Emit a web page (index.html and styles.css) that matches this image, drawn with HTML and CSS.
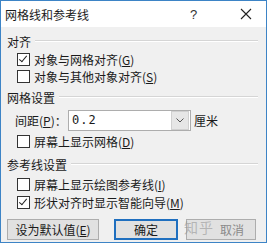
FILE: index.html
```html
<!DOCTYPE html>
<html lang="zh">
<head>
  <meta charset="UTF-8">
  <title>网格线和参考线</title>
  <link rel="stylesheet" href="styles.css">
</head>
<body>
  <div class="dialog">
    <div class="titlebar">
      <span class="title">网格线和参考线</span>
      <span class="help">?</span>
      <span class="close">
        <svg width="12" height="12" viewBox="0 0 12 12"><path d="M1 1 L11 11 M11 1 L1 11" stroke="#222" stroke-width="1.1" fill="none"/></svg>
      </span>
    </div>

    <div class="content">
      <div class="group-head"><span>对齐</span><i class="rule"></i></div>
      <label class="check"><span class="box on"></span>对象与网格对齐(<u>G</u>)</label>
      <label class="check"><span class="box"></span>对象与其他对象对齐(<u>S</u>)</label>

      <div class="group-head"><span>网格设置</span><i class="rule"></i></div>
      <div class="spacing">
        <span class="lbl">间距(<u>P</u>)：</span>
        <div class="combo">
          <span class="val">0.2</span>
          <span class="arrow">
            <svg width="8" height="5" viewBox="0 0 8 5"><path d="M0.5 0.5 L4 4 L7.5 0.5" stroke="#555" fill="none"/></svg>
          </span>
        </div>
        <span class="unit">厘米</span>
      </div>
      <label class="check grid-check"><span class="box"></span>屏幕上显示网格(<u>D</u>)</label>

      <div class="group-head guides"><span>参考线设置</span><i class="rule"></i></div>
      <label class="check first"><span class="box"></span>屏幕上显示绘图参考线(<u>I</u>)</label>
      <label class="check second"><span class="box on"></span>形状对齐时显示智能向导(<u>M</u>)</label>

      <div class="buttons">
        <button class="btn wide">设为默认值(<u>E</u>)</button>
        <button class="btn default">确定</button>
        <button class="btn cancel">取消</button>
      </div>
    </div>
    <span class="watermark">知乎</span>
  </div>
</body>
</html>
```

FILE: styles.css
```css
body {
  margin: 0;
  font-family: "Noto Sans CJK SC", "Liberation Sans", sans-serif;
  font-size: 12px;
  color: #1a1a1a;
}
.dialog {
  position: relative;
  width: 265px;
  height: 241px;
  border: 1px solid #3d84c6;
  background: #f0f0f0;
  display: flex;
  flex-direction: column;
}
.titlebar {
  height: 26px;
  background: #fff;
  display: flex;
  align-items: center;
  padding-left: 4px;
}
.title {
  flex: 1;
  font-size: 12px;
}
.help {
  width: 16px;
  margin-right: 34px;
  font-family: "Liberation Sans", sans-serif;
  font-size: 13px;
  color: #333;
}
.close {
  width: 12px;
  margin-right: 14px;
  display: flex;
}
.content {
  padding: 2px 6px 0 6px;
  display: flex;
  flex-direction: column;
}
.group-head {
  display: flex;
  align-items: center;
  height: 20px;
  margin-top: 2px;
}
.group-head.guides {
  margin-top: 4px;
}
.group-head span {
  margin-right: 4px;
}
.rule {
  flex: 1;
  height: 0;
  border-top: 1px solid #d5d5d5;
  border-bottom: 1px solid #fff;
  margin-right: 2px;
}
.check {
  display: flex;
  align-items: center;
  height: 17px;
  padding-left: 10px;
}
.check.grid-check {
  margin-top: 1px;
}
.check.first {
  margin-top: 2px;
}
.check.second {
  margin-top: 1px;
}
.box {
  width: 11px;
  height: 11px;
  border: 1px solid #333;
  background: #fff;
  margin-right: 4px;
  position: relative;
}
.box.on::after {
  content: "";
  position: absolute;
  left: 3px;
  top: 0;
  width: 3px;
  height: 7px;
  border-right: 1px solid #222;
  border-bottom: 1px solid #222;
  transform: rotate(40deg);
}
.spacing {
  display: flex;
  align-items: center;
  height: 24px;
  margin-top: 1px;
  padding-left: 8px;
}
.lbl {
  width: 53px;
}
.combo {
  width: 121px;
  height: 19px;
  border: 1px solid #adadad;
  background: #fff;
  display: flex;
  align-items: center;
}
.val {
  flex: 1;
  padding-left: 3px;
  font-family: "DejaVu Sans Mono", monospace;
  font-size: 12px;
  letter-spacing: 1px;
}
.arrow {
  width: 16px;
  height: 17px;
  margin-right: 1px;
  background: #e6e6e6;
  border: 1px solid #d0d0d0;
  display: flex;
  align-items: center;
  justify-content: center;
}
.unit {
  margin-left: 3px;
}
.buttons {
  display: flex;
  margin-top: 8px;
}
.btn {
  height: 21px;
  width: 64px;
  border: 1px solid #adadad;
  background: #e1e1e1;
  font-family: inherit;
  font-size: 12px;
  color: #1a1a1a;
  padding: 0;
}
.btn.wide {
  width: 92px;
  margin-right: 15px;
}
.btn.default {
  border: 2px solid #1f6fbf;
  margin-right: 8px;
}
.btn.cancel {
  width: 70px;
  padding-left: 22px;
  color: #8a8a8a;
}
.watermark {
  position: absolute;
  left: 183px;
  bottom: 5px;
  font-size: 14px;
  color: rgba(150, 150, 150, 0.6);
  letter-spacing: 1px;
}
```
